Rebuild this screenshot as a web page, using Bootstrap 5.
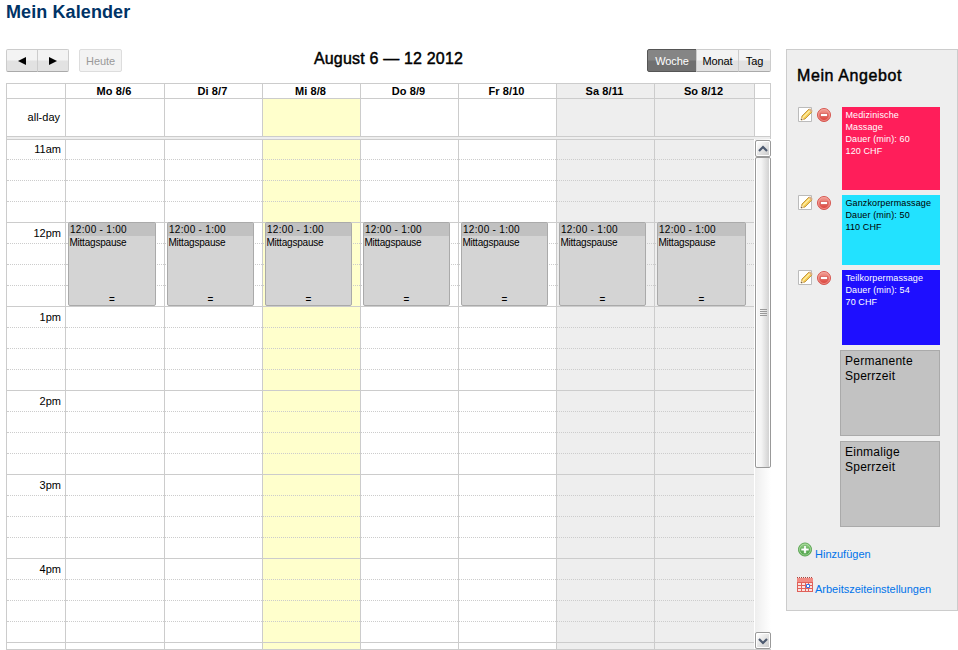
<!DOCTYPE html>
<html lang="de">
<head>
<meta charset="utf-8">
<title>Mein Kalender</title>
<link href="https://cdn.jsdelivr.net/npm/bootstrap@5.3.0/dist/css/bootstrap.min.css" rel="stylesheet">
<style>
body{font:11px/13px "Liberation Sans",Arial,sans-serif;color:#000;background:#fff;height:650px;overflow:hidden}
.page{padding-left:6px;gap:15px}
.planner{width:765px}
.page-title{font-size:18px;line-height:22px;font-weight:700;color:#036;margin:1px 0 26px;letter-spacing:.1px}
.toolbar{height:34px}
.range{font-size:16px;line-height:19px;font-weight:400;letter-spacing:.18px;-webkit-text-stroke:.45px #000}
.tbtn{height:23px;padding:0;line-height:20px;font-size:11px;letter-spacing:-.1px;border:1px solid #ccc;border-bottom-color:#aaa;border-radius:0;color:#000;background:linear-gradient(#f3f3f3 0 48%,#e2e2e2 52%)}
.tbtn:first-child{border-radius:2px 0 0 2px}.tbtn:last-child{border-radius:0 2px 2px 0}
.tbtn.on{background:linear-gradient(#858585 0 48%,#707070 52%);color:#fff;border-color:#555}
.tbtn.off{color:#999;border-color:#ddd;background:#f3f3f3;border-radius:2px;opacity:1}
.week{display:grid;grid-template-columns:59px 99px repeat(5,98px) 100px 17px}
.week>div{border-left:1px solid #ccc}
.heads{height:15px;border-top:1px solid #ccc;font-weight:700;text-align:center;line-height:14px;letter-spacing:.1px}
.heads>div{height:14px;padding-right:2px}
.allday{height:39px;border-top:1px solid #ccc;border-bottom:1px solid #ccc}
.heads>:last-child,.allday>:last-child{border-right:1px solid #ccc}
.divider{height:2px;background:#eee;border:solid #ccc;border-width:0 1px}
.hours{height:511px;overflow:hidden;border-bottom:1px solid #ccc}
.week.hours>.bar{border-left:0}
.today{background:#ffc}.weekend{background:#eee}
.axis-label{padding-right:5px}
.slot{height:21px;border-top:1px dotted #ccc;text-align:right;padding-right:4px;line-height:20px}
.slot.full{border-top-style:solid}.slot.first{height:20px;line-height:19px}
.event{left:2px;right:8px;top:83px;height:84px;border:1px solid #aaa;border-radius:2px;background:#d4d4d4;font-size:10px;line-height:12px}
.event-time{background:#c1c1c1;height:13px;padding-left:1px;line-height:14px;letter-spacing:.3px}
.event-name{line-height:13px;letter-spacing:-.2px;padding-left:.4px}
.grip{bottom:0;left:0;right:0;text-align:center;line-height:11px}
.bar{padding:1px 0 0 1px;height:510px;background:linear-gradient(90deg,#fff 0 1px,#eee 1px,#fff)}
.bar svg{display:block}
.thumb{height:311px;border:1px solid #999;border-radius:2px;background:linear-gradient(90deg,#fff 0 1px,#f5f5f5 1px 5px,#d2d2d2 13px,#fff 13px)}
.offers{width:172px;height:562px;margin-top:49px;background:#eee;border:1px solid #ccc}
.offers h2{font-size:16px;line-height:20px;font-weight:400;margin:16px 0 21px 10px;letter-spacing:.6px;-webkit-text-stroke:.45px #000}
.offer{padding:0 17px 0 11px;margin-bottom:5px}
.offer svg{margin-right:3px;flex:none}
.tile{width:98px;margin-left:auto;padding:2px 4px 2px 3.5px;font-size:9px;line-height:12px;letter-spacing:.12px}
.block{width:100px;height:86px;border:1px solid #aaa;background:#c2c2c2;font-size:12px;line-height:15px;padding:3px 4px;letter-spacing:.25px}
.pink{background:#ff1e5a;color:#fff;height:83px}.cyan{background:#22e2ff;height:70px}.blue{background:#1e0fff;color:#fff;height:75px}
.action{color:#0073ea;text-decoration:none;margin-left:10px;gap:2px;height:19px}
.add{margin-top:15px}.settings{margin-top:16px}
.nav-step{width:32px}.nav-now{width:43px;margin-left:10px}.view-week{width:50px}.view-month{width:43px}.view-day{width:33px}
</style>
<script src="https://cdn.jsdelivr.net/npm/bootstrap@5.3.0/dist/js/bootstrap.bundle.min.js"></script>
</head>
<body>
<svg class="position-absolute" width="0" height="0">
<defs><linearGradient id="gr" x2="0" y2="1"><stop stop-color="#f4a49a"/><stop offset="1" stop-color="#d93a33"/></linearGradient>
<linearGradient id="gg" x2="0" y2="1"><stop stop-color="#9fd58f"/><stop offset="1" stop-color="#3c9a38"/></linearGradient>
<linearGradient id="sb" x2="1" y2="1"><stop stop-color="#fff"/><stop offset="1" stop-color="#ccc"/></linearGradient></defs>
<symbol id="edit" viewBox="0 0 16 16"><path d="M.5.5h13v14H.5z" fill="#fff" stroke="#bbb"/><path d="M3 13l1-4 7-7 3 3-7 7z" fill="#f4cb55" stroke="#b8862a" stroke-width=".8"/><path d="M5 10.5L12 3.5" stroke="#fff0a5" stroke-width="1.2"/><path d="M10.5 2.5l1.5-1.3 2.8 2.8-1.4 1.4z" fill="#d8b087"/><path d="M3 13l.8-3 2.3 2.2z" fill="#f4dfbf"/><path d="M3 13l.3-1.3 1 1z" fill="#333"/></symbol>
<symbol id="del" viewBox="0 0 16 16"><circle cx="7" cy="8" r="6.5" fill="url(#gr)" stroke="#d65751"/><circle cx="7" cy="8" r="5.5" fill="none" stroke="#f3aaa3" stroke-width=".7"/><path d="M3.5 6.5h7v3h-7z" fill="#fff" stroke="#cf3e37" stroke-width=".6"/></symbol>
<symbol id="plus" viewBox="0 0 16 16"><circle cx="8" cy="7.5" r="6.5" fill="url(#gg)" stroke="#58a44f"/><circle cx="8" cy="7.5" r="5.5" fill="none" stroke="#b4dfaa" stroke-width=".7"/><path d="M6.7 3.5h2.6v2.7H12v2.6H9.3v2.7H6.7V8.8H4V6.2h2.7z" fill="#fff" stroke="#4a9a45" stroke-width=".5"/></symbol>
<symbol id="cal" viewBox="0 0 16 16"><path d="M0 1h16v14H0z" fill="#e06059"/><path d="M0 1h16v4H0z" fill="#f18b83"/><path d="M0 .5h16" stroke="#a8443e" stroke-dasharray="1 1"/><path d="M1 6h3v2H1zm4 0h3v2H5zm4 0h2v2H9zm3 0h3v2h-3zM1 9h3v2H1zm4 0h3v2H5zm4 0h2v2H9zm3 0h3v2h-3zM1 12h3v2H1zm4 0h3v2H5zm4 0h2v2H9zm3 0h3v2h-3z" fill="#fbe3e0"/><path d="M9.5 7.5h3v3h-3z" fill="#fff" stroke="#356fe0"/></symbol>
</svg>
<div class="page d-flex">
<main class="planner">
<h1 class="page-title">Mein Kalender</h1>
<div class="toolbar d-flex align-items-start position-relative">
<div class="btn-group"><button class="btn tbtn nav-step"><svg class="d-block mx-auto" width="8" height="8"><path d="M8 0v8L0 4z"/></svg></button><button class="btn tbtn nav-step"><svg class="d-block mx-auto" width="8" height="8"><path d="M0 0v8l8-4z"/></svg></button></div>
<button class="btn tbtn off nav-now" disabled>Heute</button>
<h2 class="range m-0 position-absolute start-50 translate-middle-x text-nowrap">August 6 — 12 2012</h2>
<div class="btn-group ms-auto"><button class="btn tbtn on view-week">Woche</button><button class="btn tbtn view-month">Monat</button><button class="btn tbtn view-day">Tag</button></div>
</div>
<div class="week heads"><div></div><div>Mo 8/6</div><div>Di 8/7</div><div>Mi 8/8</div><div>Do 8/9</div><div>Fr 8/10</div><div class="weekend">Sa 8/11</div><div class="weekend">So 8/12</div><div></div></div>
<div class="week allday"><div class="axis-label d-flex align-items-center justify-content-end">all-day</div><div></div><div></div><div class="today"></div><div></div><div></div><div class="weekend"></div><div class="weekend"></div><div></div></div>
<div class="divider"></div>
<div class="week hours" id="hours"></div>
</main>
<aside class="offers">
<h2>Mein Angebot</h2>
<div class="offer d-flex"><svg width="16" height="16"><use href="#edit"/></svg><svg width="16" height="16"><use href="#del"/></svg><div class="tile pink">Medizinische Massage<br>Dauer (min): 60<br>120 CHF</div></div>
<div class="offer d-flex"><svg width="16" height="16"><use href="#edit"/></svg><svg width="16" height="16"><use href="#del"/></svg><div class="tile cyan">Ganzkorpermassage<br>Dauer (min): 50<br>110 CHF</div></div>
<div class="offer d-flex"><svg width="16" height="16"><use href="#edit"/></svg><svg width="16" height="16"><use href="#del"/></svg><div class="tile blue">Teilkorpermassage<br>Dauer (min): 54<br>70 CHF</div></div>
<div class="offer d-flex"><div class="tile block">Permanente Sperrzeit</div></div>
<div class="offer d-flex"><div class="tile block">Einmalige Sperrzeit</div></div>
<a class="action add d-flex align-items-end" href="#"><svg width="16" height="16" class="align-self-start"><use href="#plus"/></svg><span>Hinzufügen</span></a>
<a class="action settings d-flex align-items-end" href="#"><svg width="16" height="16" class="align-self-start"><use href="#cal"/></svg><span>Arbeitszeiteinstellungen</span></a>
</aside>
</div>
<script>
const labels = ['11am', '12pm', '1pm', '2pm', '3pm', '4pm', ''];
const tones = ['', '', '', 'today', '', '', 'weekend', 'weekend'];
const column = (tone, day) => {
  let html = '';
  labels.forEach((label, hour) => {
    for (let q = 0; q < 4; q++)
      html += `<div class="slot ${q ? '' : 'full'} ${hour + q ? '' : 'first'}">${!day && !q ? label : ''}</div>`;
  });
  if (day) html += '<div class="event position-absolute"><div class="event-time">12:00 - 1:00</div><div class="event-name">Mittagspause</div><div class="grip position-absolute">=</div></div>';
  return `<div class="position-relative ${tone}">${html}</div>`;
};
const arrow = d => `<svg width="16" height="17"><rect x=".5" y=".5" width="15" height="16" rx="1.5" fill="#fff" stroke="#999"/><path d="M2 2h12v13H2z" fill="url(#sb)"/><path d="${d}" fill="none" stroke="#4d5a70" stroke-width="2.2"/></svg>`;
document.getElementById('hours').innerHTML = tones.map(column).join('') +
  `<div class="bar d-flex flex-column">${arrow('M4 11l4-4 4 4')}<div class="thumb d-flex align-items-center justify-content-center"><svg width="7" height="8"><path d="M0 .5h7M0 2.5h7M0 4.5h7M0 6.5h7" stroke="#999"/></svg></div><div class="mt-auto">${arrow('M4 7l4 4 4-4')}</div></div>`;
</script>
</body>
</html>
